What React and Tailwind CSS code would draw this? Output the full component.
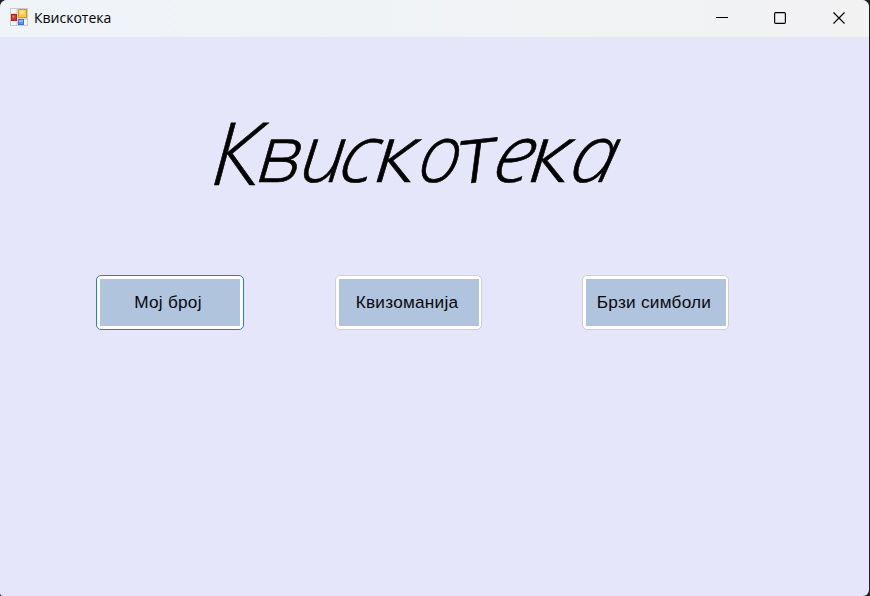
import React from "react";

const letters = [
  ["К", "w-[46px] origin-left -skew-x-3 scale-x-[1.02] text-[87px]"],
  ["в", "w-[44px] not-italic -skew-x-[16deg] translate-x-[3px]"],
  ["и", "w-[42px] -skew-x-6"],
  ["с", "w-[35px] -skew-x-[16deg]"],
  ["к", "w-[41px] -skew-x-3 scale-x-[1.15]"],
  ["о", "w-[40px] -skew-x-12 scale-x-[.92]"],
  ["т", "w-[38px] not-italic -skew-x-12 -rotate-6 scale-x-[1.12]"],
  ["е", "w-[35px] -skew-x-[16deg]"],
  ["к", "w-[42px] -skew-x-3 scale-x-[1.15]"],
  ["а", "w-[43px] -skew-x-12 scale-x-105"],
];

function AppIcon() {
  return (
    <svg width="18" height="18" viewBox="0 0 18 18" className="mb-[3px] shrink-0">
      <rect x=".5" y=".5" width="17" height="17" fill="#d9dadd" stroke="#c9cacd" />
      <rect x="1" y="1" width="5" height="4" fill="#f5f6f8" />
      <rect x="1" y="13" width="5" height="4" fill="#f5f6f8" />
      <rect x="14" y="12" width="3" height="5" fill="#f5f6f8" />
      <rect x="1.5" y="6.5" width="5" height="6" fill="#cc3b2c" stroke="#a8281c" />
      <rect x="2.5" y="7.5" width="2" height="2" fill="#e98a7b" />
      <rect x="8.5" y="1.5" width="8" height="8" fill="#fbc937" stroke="#d49a18" />
      <rect x="9.5" y="2.5" width="5" height="4" fill="#fde285" />
      <rect x="8.5" y="11.5" width="5" height="5" fill="#5c93ea" stroke="#3c70cc" />
      <rect x="9" y="12" width="4" height="2" fill="#8fb8f6" />
    </svg>
  );
}

function GameButton({ label, focused }) {
  return (
    <button
      className={`h-[55px] rounded-[5px] border bg-white py-[3px] ${
        focused ? "w-[148px] border-[#2080d0] px-[3px]" : "w-[147px] border-[#d0d0d4] pr-[2px] pl-[3px]"
      }`}
    >
      <span className="flex h-full items-center justify-center bg-[#b0c4de] pr-[4px] text-[17.2px] tracking-[0.25px] whitespace-nowrap text-[#08080c]">
        {label}
      </span>
    </button>
  );
}

export default function App() {
  return (
    <div className="h-[596px] w-[870px] overflow-hidden bg-[#202022] pr-px font-['Liberation_Sans',sans-serif]">
      <div className="flex h-full flex-col overflow-hidden rounded-t-[7px] rounded-br-[6px] rounded-bl-[3px] bg-[#e6e6fa]">
        <header className="flex h-[37px] shrink-0 items-center bg-gradient-to-r from-[#eff4f8] to-[#f2f2f3] pl-[10px] text-black">
          <AppIcon />
          <span className="mb-[2px] ml-[6px] font-['Open_Sans',sans-serif] text-[14px] leading-5">Квискотека</span>
          <svg className="mb-px ml-auto" width="169" height="36" viewBox="700 0 169 36" fill="none" stroke="black">
            <path d="M716 17.5h12" />
            <rect x="774.6" y="12.6" width="10.8" height="10.8" rx="1.2" strokeWidth="1.2" />
            <path d="M833.5 12.5l11 11m0-11l-11 11" strokeWidth="1.2" />
          </svg>
        </header>
        <main className="flex flex-col">
          <h1 className="mt-[69px] ml-[212px] flex h-[90px] items-center font-['Open_Sans',sans-serif] text-[80px] leading-none font-light text-black italic [-webkit-text-stroke:0.6px]">
            {letters.map(([letter, style], i) => (
              <span key={i} className={`inline-block shrink-0 ${style}`}>{letter}</span>
            ))}
          </h1>
          <div className="mt-[79px] flex pl-24">
            <GameButton label="Мој број" focused />
            <div className="w-[91px]" />
            <GameButton label="Квизоманија" />
            <div className="w-[100px]" />
            <GameButton label="Брзи симболи" />
          </div>
        </main>
      </div>
    </div>
  );
}
